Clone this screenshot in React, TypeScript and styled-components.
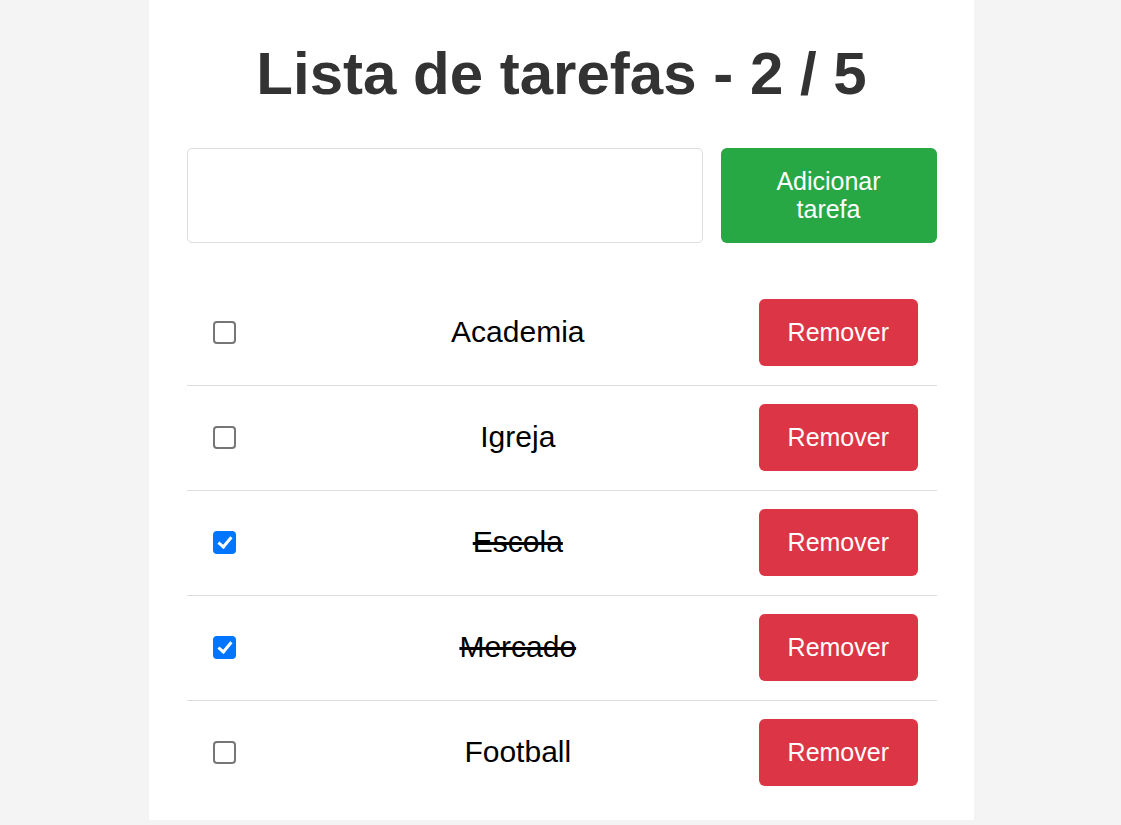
import React, { useState } from "react";
import styled, { createGlobalStyle } from "styled-components";

const GlobalStyle = createGlobalStyle`
  html, body {
    margin: 0;
    padding: 0;
    background: #f4f4f4;
    font-family: "Liberation Sans", Arial, sans-serif;
    overflow: hidden;
  }
`;

const Container = styled.div`
  width: 750px;
  margin: 0 auto 5px;
  padding: 40px 37.5px 15px;
  background: #ffffff;
  box-sizing: content-box;
  position: relative;
  left: 1px;
`;

const Title = styled.h1`
  margin: 0 0 41px;
  font-size: 60px;
  line-height: 67px;
  font-weight: 700;
  color: #333333;
  text-align: center;
`;

const Form = styled.div`
  display: flex;
  gap: 18px;
  height: 95px;
`;

const TextInput = styled.input`
  flex: 1;
  min-width: 0;
  box-sizing: border-box;
  border: 1px solid #dddddd;
  border-radius: 5px;
  font-family: inherit;
  font-size: 25px;
  padding: 0 15px;
  outline: none;
`;

const AddButton = styled.button`
  width: 216px;
  border: none;
  border-radius: 6px;
  background: #28a745;
  color: #ffffff;
  font-family: inherit;
  font-size: 25px;
  line-height: 28px;
  padding: 0 25px 1px;
  cursor: pointer;
`;

const List = styled.ul`
  list-style: none;
  margin: 38px 0 0;
  padding: 0;
`;

const Row = styled.li`
  display: flex;
  align-items: center;
  height: 102px;
  padding: 0 19px 2px 26px;
  border-bottom: 1px solid #dddddd;
  &:last-child {
    border-bottom: none;
  }
`;

const Check = styled.input`
  appearance: none;
  -webkit-appearance: none;
  position: relative;
  box-sizing: border-box;
  width: 23px;
  height: 23px;
  margin: 0 41px 0 0;
  flex-shrink: 0;
  border: 2px solid #767676;
  border-radius: 4px;
  background: #ffffff;
  cursor: pointer;

  &:checked {
    border: none;
    background: #0075ff;
  }

  &:checked::after {
    content: "";
    position: absolute;
    left: 8px;
    top: 3px;
    width: 5px;
    height: 11px;
    border: solid #ffffff;
    border-width: 0 3.5px 3.5px 0;
    transform: rotate(40deg);
  }
`;

const ItemText = styled.span<{ $done: boolean }>`
  flex: 1;
  text-align: center;
  font-size: 30px;
  color: #000000;
  text-decoration: ${(p) => (p.$done ? "line-through" : "none")};
`;

const RemoveButton = styled.button`
  height: 67px;
  padding: 0 28.5px;
  border: none;
  border-radius: 6px;
  background: #dc3545;
  color: #ffffff;
  font-family: inherit;
  font-size: 25px;
  cursor: pointer;
`;

type Task = { id: number; text: string; done: boolean };

export default function App() {
  const [tasks, setTasks] = useState<Task[]>([
    { id: 1, text: "Academia", done: false },
    { id: 2, text: "Igreja", done: false },
    { id: 3, text: "Escola", done: true },
    { id: 4, text: "Mercado", done: true },
    { id: 5, text: "Football", done: false },
  ]);
  const [value, setValue] = useState("");

  const doneCount = tasks.filter((t) => t.done).length;

  const add = () => {
    if (!value.trim()) return;
    setTasks([...tasks, { id: Date.now(), text: value.trim(), done: false }]);
    setValue("");
  };

  return (
    <>
      <GlobalStyle />
      <Container>
        <Title>
          Lista de tarefas - {doneCount} / {tasks.length}
        </Title>
        <Form>
          <TextInput value={value} onChange={(e) => setValue(e.target.value)} />
          <AddButton onClick={add}>Adicionar tarefa</AddButton>
        </Form>
        <List>
          {tasks.map((t) => (
            <Row key={t.id}>
              <Check
                type="checkbox"
                checked={t.done}
                onChange={() =>
                  setTasks(tasks.map((x) => (x.id === t.id ? { ...x, done: !x.done } : x)))
                }
              />
              <ItemText $done={t.done}>{t.text}</ItemText>
              <RemoveButton onClick={() => setTasks(tasks.filter((x) => x.id !== t.id))}>
                Remover
              </RemoveButton>
            </Row>
          ))}
        </List>
      </Container>
    </>
  );
}
